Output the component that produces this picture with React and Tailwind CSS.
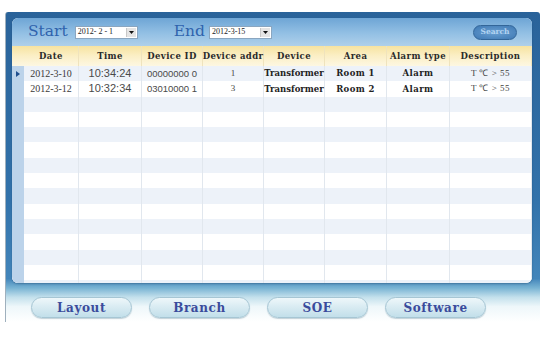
import React from 'react'

const COLS = [
  { key: 'date', label: 'Date', w: 'w-[55px]' },
  { key: 'time', label: 'Time', w: 'w-[63px]' },
  { key: 'id', label: 'Device ID', w: 'w-[61px]' },
  { key: 'addr', label: 'Device addr', w: 'w-[61px]' },
  { key: 'device', label: 'Device', w: 'w-[61px]' },
  { key: 'area', label: 'Area', w: 'w-[62px]' },
  { key: 'type', label: 'Alarm type', w: 'w-[63px]' },
  { key: 'desc', label: 'Description', w: 'w-[82px]' },
]

const ROWS = [
  { date: '2012-3-10', time: '10:34:24', id: '00000000 0', addr: '1', device: 'Transformer', area: 'Room 1', type: 'Alarm', desc: 'T ℃ > 55' },
  { date: '2012-3-12', time: '10:32:34', id: '03010000 1', addr: '3', device: 'Transformer', area: 'Room 2', type: 'Alarm', desc: 'T ℃ > 55' },
]

// font per column, written out in full
const CELL_FONT = {
  date: "font-['Liberation_Serif',serif] text-[10px] text-[#3a3a3a]",
  time: "font-['Liberation_Sans',sans-serif] text-[11px] text-[#4a4a4a]",
  id: "font-['Liberation_Sans',sans-serif] text-[9.5px] text-[#4a4a4a]",
  addr: "font-['Liberation_Serif',serif] text-[9px] text-[#444]",
  device: "font-['DejaVu_Serif',serif] font-bold text-[8.5px] text-[#222]",
  area: "font-['DejaVu_Serif',serif] font-bold text-[8.5px] text-[#222] tracking-[0.4px]",
  type: "font-['DejaVu_Serif',serif] font-bold text-[8.5px] text-[#222] tracking-[0.4px]",
  desc: "font-['Liberation_Serif',serif] text-[9px] text-[#444] tracking-[0.5px]",
}

function DateBox({ value }) {
  return (
    <div className="flex items-stretch w-[63px] h-[13px] bg-white border border-[#8aa6c0]">
      <span className="flex-1 flex items-center pl-[2px] font-['Liberation_Serif',serif] text-[8px] text-[#222] leading-none">
        {value}
      </span>
      <span className="w-[10px] m-[1px] bg-[#e4e4e4] border-l border-[#c8c8c8] flex items-center justify-center">
        <svg width="5" height="3" viewBox="0 0 5 3"><path d="M0 0h5L2.5 3z" fill="#111" /></svg>
      </span>
    </div>
  )
}

function PillButton({ children }) {
  return (
    <button className="w-[101px] h-[21px] rounded-full border border-[#a6c6d4] bg-[linear-gradient(to_bottom,#eef7fa,#d3e8f0_60%,#c2dfea)] shadow-[0_1px_1px_rgba(90,130,150,0.35)] font-['DejaVu_Serif',serif] font-bold text-[12px] tracking-[0.6px] text-[#3a4b9c] leading-none">
      {children}
    </button>
  )
}

export default function App() {
  const blanks = Array.from({ length: 13 })

  return (
    <div className="w-[547px] h-[342px] bg-white pt-[12px] pl-[5px] overflow-hidden">
      <div className="w-[535px] h-[310px] flex flex-col border-l border-[#9fb0bd] rounded-t-[3px] bg-[linear-gradient(to_bottom,#2a639a_0%,#3272aa_60%,#4385ba_86%,#78b3d3_89%,#c3e0ec_92%,#eef7fa_95%,#ffffff_100%)]">
        {/* Main panel */}
        <div className="mt-[6px] ml-[6px] w-[520px] h-[265px] rounded-[6px] overflow-hidden flex flex-col bg-white shadow-[0_1px_2px_rgba(20,60,100,0.4)]">
          {/* Toolbar */}
          <div className="h-[28px] shrink-0 flex items-center bg-[linear-gradient(to_bottom,#6ea5d5,#93c0e4_55%,#afd0ea)]">
            <span className="ml-[16px] font-['DejaVu_Serif',serif] text-[15.5px] text-[#2f63ad] leading-none">Start</span>
            <div className="ml-[7px]"><DateBox value="2012- 2 - 1" /></div>
            <span className="ml-[36px] font-['DejaVu_Serif',serif] text-[15.5px] text-[#2f63ad] leading-none">End</span>
            <div className="ml-[4px]"><DateBox value="2012-3-15" /></div>
            <button className="ml-auto mr-[15px] w-[44px] h-[15px] rounded-full bg-[radial-gradient(ellipse_at_center,#6aa0d2,#3f79b4)] border border-[#336699] font-['DejaVu_Serif',serif] font-bold text-[7.5px] text-[#b3d4f2] leading-none">
              Search
            </button>
          </div>

          {/* Header */}
          <div className="h-[20px] shrink-0 flex bg-[linear-gradient(to_bottom,#f7e3a0,#fbefc6_50%,#fdf7e2)]">
            <div className="w-[12px]" />
            {COLS.map(c => (
              <div key={c.key} className={`${c.w} flex items-center justify-center border-r border-[#efe3bd] font-['DejaVu_Serif',serif] font-bold text-[8.5px] tracking-[0.4px] text-[#2a2a2a] whitespace-nowrap`}>
                {c.label}
              </div>
            ))}
          </div>

          {/* Rows */}
          <div className="flex-1 overflow-hidden">
            {ROWS.map((r, i) => (
              <div key={i} className={`h-[15.3px] flex ${i % 2 === 0 ? 'bg-[#edf2f9]' : 'bg-white'}`}>
                <div className="w-[12px] bg-[#bcd3ea] flex items-center pl-[4px]">
                  {i === 0 && (
                    <svg width="4" height="6" viewBox="0 0 4 6"><path d="M0 0l4 3-4 3z" fill="#1f4f8f" /></svg>
                  )}
                </div>
                {COLS.map(c => (
                  <div key={c.key} className={`${c.w} flex items-center justify-center border-r border-[#e1e7ee] whitespace-nowrap leading-none ${CELL_FONT[c.key]}`}>
                    {r[c.key]}
                  </div>
                ))}
              </div>
            ))}
            {blanks.map((_, j) => (
              <div key={j} className={`h-[15.3px] flex ${j % 2 === 0 ? 'bg-[#edf2f9]' : 'bg-white'}`}>
                <div className="w-[12px] bg-[#bcd3ea]" />
                {COLS.map(c => (
                  <div key={c.key} className={`${c.w} border-r border-[#e1e7ee]`} />
                ))}
              </div>
            ))}
          </div>
        </div>

        {/* Navigation buttons */}
        <div className="mt-[14px] pl-[25px] flex gap-[17px]">
          <PillButton>Layout</PillButton>
          <PillButton>Branch</PillButton>
          <PillButton>SOE</PillButton>
          <PillButton>Software</PillButton>
        </div>
      </div>
    </div>
  )
}
